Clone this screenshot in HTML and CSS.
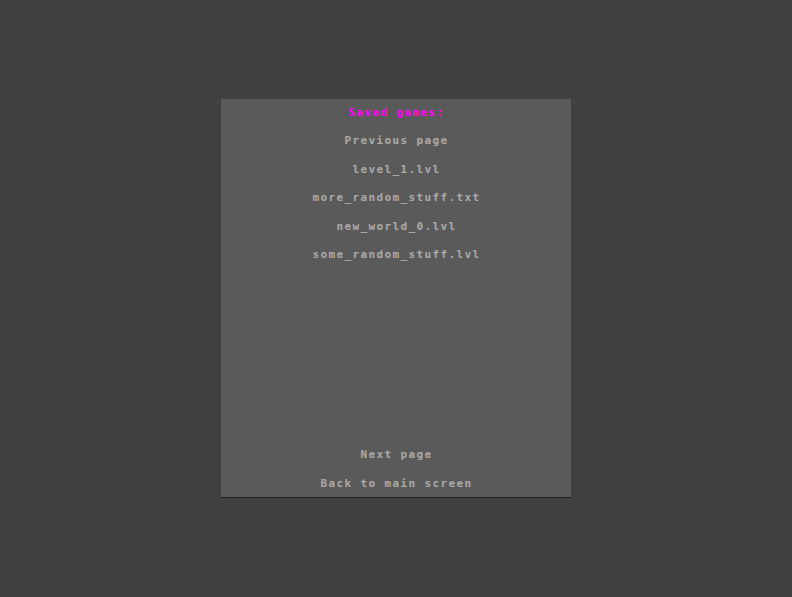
FILE: index.html
```html
<!DOCTYPE html>
<html>
<head>
<meta charset="utf-8">
<link rel="stylesheet" href="styles.css">
</head>
<body>
<div class="screen">
  <div class="panel">
    <div class="list">
      <div class="row title">Saved games:</div>
      <div class="row">Previous page</div>
      <div class="row">level_1.lvl</div>
      <div class="row">more_random_stuff.txt</div>
      <div class="row">new_world_0.lvl</div>
      <div class="row">some_random_stuff.lvl</div>
    </div>
    <div class="list bottom">
      <div class="row">Next page</div>
      <div class="row">Back to main screen</div>
    </div>
  </div>
</div>
</body>
</html>
```
FILE: styles.css
```css
html, body {
  margin: 0;
  padding: 0;
  background: #404040;
  width: 792px;
  height: 597px;
  overflow: hidden;
}
.screen {
  display: flex;
  justify-content: center;
  padding-top: 99px;
}
.panel {
  width: 350px;
  height: 398px;
  background: #5a5a5a;
  border-bottom: 1px solid #1e1e1e;
  display: flex;
  flex-direction: column;
  justify-content: space-between;
  font-family: "DejaVu Sans Mono", "Liberation Mono", monospace;
  font-weight: bold;
  font-size: 11px;
  letter-spacing: 1.38px;
  color: #aaaaaa;
}
.list {
  display: flex;
  flex-direction: column;
  margin-top: 0;
}
.list.bottom {
  margin-bottom: -1px;
}
.row {
  height: 28.4px;
  line-height: 28.4px;
  text-align: center;
  white-space: pre;
  padding-left: 1px;
}
.title {
  color: #ff00ff;
}
```
